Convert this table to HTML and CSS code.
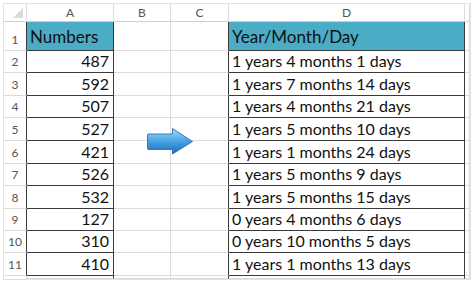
FILE: index.html
```html
<!DOCTYPE html>
<html>
<head>
<meta charset="utf-8">
<link rel="stylesheet" href="styles.css">
</head>
<body>
<div class="sheet">
  <div class="c hd corner"><span class="tri"></span></div>
  <div class="c hd">A</div>
  <div class="c hd">B</div>
  <div class="c hd">C</div>
  <div class="c hd">D</div>
  <div class="c hd"></div>

  <div class="c rh dk-r">1</div>
  <div class="c txt head dk-r dk-b">Numbers</div>
  <div class="c"></div>
  <div class="c dk-r"></div>
  <div class="c txt head dk-r dk-b">Year/Month/Day</div>
  <div class="c"></div>

  <div class="c rh dk-r">2</div>
  <div class="c num dk-r dk-b">487</div>
  <div class="c"></div>
  <div class="c dk-r"></div>
  <div class="c txt dk-r dk-b">1 years 4 months 1 days</div>
  <div class="c"></div>

  <div class="c rh dk-r">3</div>
  <div class="c num dk-r dk-b">592</div>
  <div class="c"></div>
  <div class="c dk-r"></div>
  <div class="c txt dk-r dk-b">1 years 7 months 14 days</div>
  <div class="c"></div>

  <div class="c rh dk-r">4</div>
  <div class="c num dk-r dk-b">507</div>
  <div class="c"></div>
  <div class="c dk-r"></div>
  <div class="c txt dk-r dk-b">1 years 4 months 21 days</div>
  <div class="c"></div>

  <div class="c rh dk-r">5</div>
  <div class="c num dk-r dk-b">527</div>
  <div class="c"></div>
  <div class="c dk-r"></div>
  <div class="c txt dk-r dk-b">1 years 5 months 10 days</div>
  <div class="c"></div>

  <div class="c rh dk-r">6</div>
  <div class="c num dk-r dk-b">421</div>
  <div class="c"></div>
  <div class="c dk-r"></div>
  <div class="c txt dk-r dk-b">1 years 1 months 24 days</div>
  <div class="c"></div>

  <div class="c rh dk-r">7</div>
  <div class="c num dk-r dk-b">526</div>
  <div class="c"></div>
  <div class="c dk-r"></div>
  <div class="c txt dk-r dk-b">1 years 5 months 9 days</div>
  <div class="c"></div>

  <div class="c rh dk-r">8</div>
  <div class="c num dk-r dk-b">532</div>
  <div class="c"></div>
  <div class="c dk-r"></div>
  <div class="c txt dk-r dk-b">1 years 5 months 15 days</div>
  <div class="c"></div>

  <div class="c rh dk-r">9</div>
  <div class="c num dk-r dk-b">127</div>
  <div class="c"></div>
  <div class="c dk-r"></div>
  <div class="c txt dk-r dk-b">0 years 4 months 6 days</div>
  <div class="c"></div>

  <div class="c rh dk-r">10</div>
  <div class="c num dk-r dk-b">310</div>
  <div class="c"></div>
  <div class="c dk-r"></div>
  <div class="c txt dk-r dk-b">0 years 10 months 5 days</div>
  <div class="c"></div>

  <div class="c rh dk-r">11</div>
  <div class="c num dk-r dk-b">410</div>
  <div class="c"></div>
  <div class="c dk-r"></div>
  <div class="c txt dk-r dk-b">1 years 1 months 13 days</div>
  <div class="c"></div>

  <div class="c rh"></div>
  <div class="c dk-r"></div>
  <div class="c"></div>
  <div class="c dk-r"></div>
  <div class="c dk-r"></div>
  <div class="c"></div>

  <svg class="arrow" width="50" height="29" viewBox="0 0 50 29" xmlns="http://www.w3.org/2000/svg">
    <defs>
      <linearGradient id="ag" x1="0" y1="0" x2="0" y2="1">
        <stop offset="0" stop-color="#a9dcf8"/>
        <stop offset="0.45" stop-color="#4ea8e6"/>
        <stop offset="1" stop-color="#1c68bb"/>
      </linearGradient>
    </defs>
    <path d="M3.5,7 H27.5 V1.5 L47.5,14.5 L27.5,27 V22.5 H3.5 Q2.5,22.5 2.5,21.5 V8 Q2.5,7 3.5,7 Z" fill="url(#ag)" stroke="#2e6fae" stroke-width="0.9" stroke-linejoin="round"/>
  </svg>
</div>
</body>
</html>
```

FILE: styles.css
```css
html, body {
  margin: 0;
  padding: 0;
  background: #ffffff;
}

.sheet {
  position: relative;
  margin: 3px 0 0 3px;
  width: 468px;
  box-sizing: border-box;
  border: 1px solid #e3e3e3;
  display: grid;
  grid-template-columns: 23px 87px 57px 58px 236px 1fr;
  grid-template-rows: 18px 29px 22px 23px 22px 23px 23px 22px 23px 22px 22px 23px 3px;
  font-family: Lato, "Open Sans", sans-serif;
  color: #111;
}

.c {
  box-sizing: border-box;
  border-right: 1px solid #dcdcdc;
  border-bottom: 1px solid #dcdcdc;
  display: flex;
  align-items: flex-end;
  overflow: hidden;
  white-space: nowrap;
}

.hd {
  justify-content: center;
  align-items: center;
  font-size: 12px;
  color: #555;
  border-bottom-color: #d0d0d0;
}

.corner {
  position: relative;
}

.tri {
  position: absolute;
  right: 3px;
  bottom: 3px;
  width: 0;
  height: 0;
  border-left: 10px solid transparent;
  border-bottom: 10px solid #dadada;
}

.rh {
  justify-content: center;
  font-size: 12px;
  color: #555;
  padding-bottom: 3px;
}

.num {
  justify-content: flex-end;
  padding-right: 4px;
  font-size: 16px;
  line-height: 16px;
  padding-bottom: 3px;
}

.txt {
  justify-content: flex-start;
  padding-left: 3px;
  font-size: 16px;
  line-height: 16px;
  padding-bottom: 3px;
}

.head {
  background: #4bacc6;
  font-size: 17px;
  line-height: 17px;
  padding-bottom: 5px;
}

.dk-r {
  border-right-color: #3a3a3a;
}

.dk-b {
  border-bottom-color: #3a3a3a;
}

.arrow {
  position: absolute;
  left: 141px;
  top: 123px;
}
```
